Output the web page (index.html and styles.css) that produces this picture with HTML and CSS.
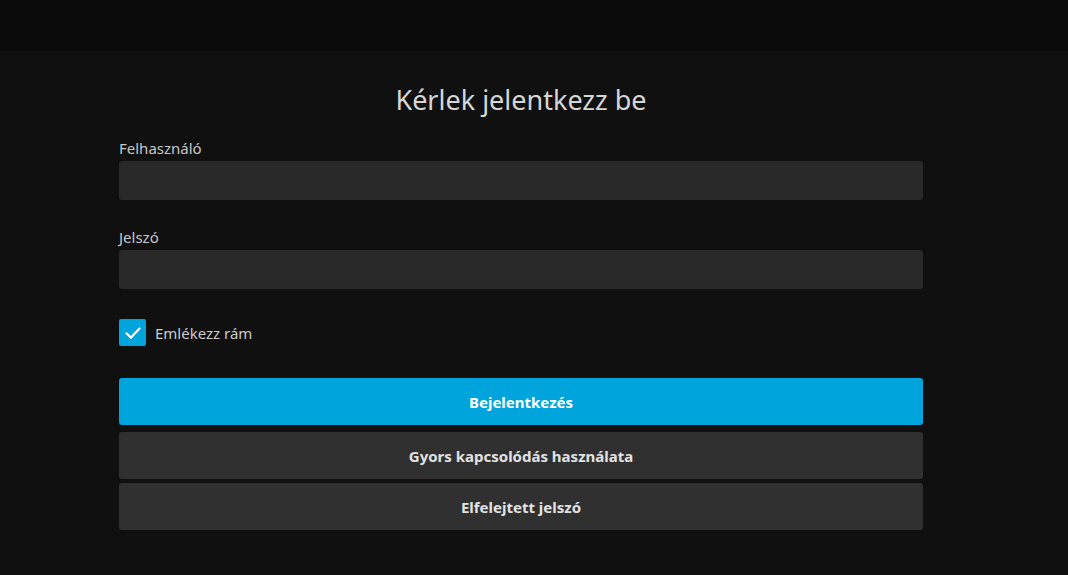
FILE: index.html
```html
<!DOCTYPE html>
<html lang="hu">
<head>
<meta charset="utf-8">
<title>Jellyfin</title>
<link rel="stylesheet" href="styles.css">
</head>
<body>
<header class="topbar"></header>
<main class="page">
  <form class="login">
    <h1 class="title">Kérlek jelentkezz be</h1>
    <div class="field">
      <label class="label" for="user">Felhasználó</label>
      <input class="input" id="user" type="text">
    </div>
    <div class="field">
      <label class="label" for="pw">Jelszó</label>
      <input class="input" id="pw" type="password">
    </div>
    <label class="check">
      <span class="box">
        <svg viewBox="0 0 24 24" width="20" height="20"><path d="M4.5 12.5l5 5L19.5 7" fill="none" stroke="#fff" stroke-width="2.6" stroke-linecap="square"/></svg>
      </span>
      <span class="check-text">Emlékezz rám</span>
    </label>
    <button type="button" class="btn btn-primary">Bejelentkezés</button>
    <button type="button" class="btn btn-secondary btn-quick">Gyors kapcsolódás használata</button>
    <button type="button" class="btn btn-secondary btn-forgot">Elfelejtett jelszó</button>
  </form>
</main>
</body>
</html>
```

FILE: styles.css
```css
html, body {
  margin: 0;
  padding: 0;
  background: #101010;
  font-family: "Noto Sans", "Open Sans", sans-serif;
  color: #dadada;
}

.topbar {
  height: 51px;
  background: #0a0a0a;
}

.page {
  padding: 33px 0 0 119px;
}

.login {
  width: 804px;
  display: flex;
  flex-direction: column;
}

.title {
  margin: 0 0 23px;
  font-size: 27px;
  font-weight: 400;
  line-height: 32px;
  text-align: center;
  color: #d6d6d6;
}

.field {
  display: flex;
  flex-direction: column;
  margin-bottom: 28px;
}

.label {
  font-size: 15px;
  line-height: 18px;
  color: #c8c8c8;
  margin-bottom: 4px;
}

.input {
  height: 39px;
  box-sizing: border-box;
  border: none;
  border-radius: 3px;
  background: #292929;
  color: #fff;
  font: inherit;
  padding: 0 10px;
  outline: none;
}

.check {
  display: flex;
  align-items: center;
  gap: 9px;
  margin: 2px 0 32px;
  height: 27px;
}

.box {
  width: 27px;
  height: 27px;
  border-radius: 2px;
  background: #00a4dc;
  display: flex;
  align-items: center;
  justify-content: center;
}

.check-text {
  font-size: 15px;
  color: #cccccc;
}

.btn {
  height: 47px;
  border: none;
  border-radius: 3px;
  font-family: inherit;
  font-size: 15px;
  font-weight: 700;
  cursor: pointer;
  padding: 0;
}

.btn-primary {
  background: #00a4dc;
  color: #ffffff;
  margin-bottom: 7px;
}

.btn-secondary {
  background: #303030;
  color: #e2e2e2;
}

.btn-quick {
  margin-bottom: 4px;
}
```
